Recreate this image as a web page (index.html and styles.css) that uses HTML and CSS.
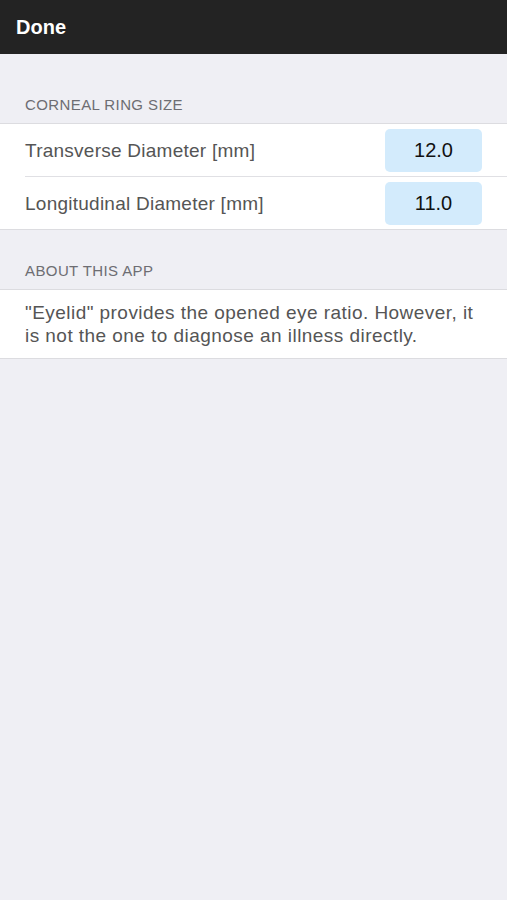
FILE: index.html
```html
<!DOCTYPE html>
<html>
<head>
    <meta name="viewport" content="width=device-width, user-scalable=no">
    <link rel="stylesheet" href="styles.css">
</head>
<body>
<div class="nav-bar">
    <button class="done-button">Done</button>
</div>
<div class="section-header first">CORNEAL RING SIZE</div>
<div class="group">
    <div class="row">
        <div class="label">Transverse Diameter [mm]</div>
        <div class="value">12.0</div>
    </div>
    <div class="row">
        <div class="label">Longitudinal Diameter [mm]</div>
        <div class="value">11.0</div>
    </div>
</div>
<div class="section-header">ABOUT THIS APP</div>
<div class="group">
    <div class="about">"Eyelid" provides the opened eye ratio. However, it is not the one to diagnose an illness directly.</div>
</div>
</body>
</html>
```

FILE: styles.css
```css
body {
    margin: 0;
    height: 100vh;
    background-color: #efeff4;
    font-family: "Liberation Sans", Arial, sans-serif;
    overflow: hidden;
}

.nav-bar {
    height: 54px;
    background-color: #232323;
    display: flex;
    align-items: center;
    padding-left: 16px;
}

.done-button {
    background: none;
    border: none;
    padding: 0;
    color: #fff;
    font-family: inherit;
    font-size: 20px;
    font-weight: bold;
}

.section-header {
    padding: 31px 25px 9px;
    font-size: 15px;
    letter-spacing: 0.4px;
    color: #6d6d72;
    line-height: 19px;
}
.section-header.first {
    padding-top: 41px;
}

.group {
    background-color: #fff;
    border-top: 1px solid #dcdce0;
    border-bottom: 1px solid #dcdce0;
}

.row {
    height: 52px;
    margin-left: 25px;
    padding-right: 25px;
    display: flex;
    align-items: center;
    justify-content: space-between;
}
.row + .row {
    border-top: 1px solid #e0e0e4;
}

.label {
    padding-top: 2px;
    font-size: 19px;
    letter-spacing: 0.25px;
    color: #555;
}

.value {
    width: 97px;
    height: 43px;
    border-radius: 5px;
    background-color: #d3ebfc;
    display: flex;
    justify-content: center;
    align-items: center;
    font-size: 20px;
    color: #111;
}

.about {
    padding: 11px 25px;
    font-size: 19px;
    letter-spacing: 0.45px;
    line-height: 23px;
    color: #555;
}
```
